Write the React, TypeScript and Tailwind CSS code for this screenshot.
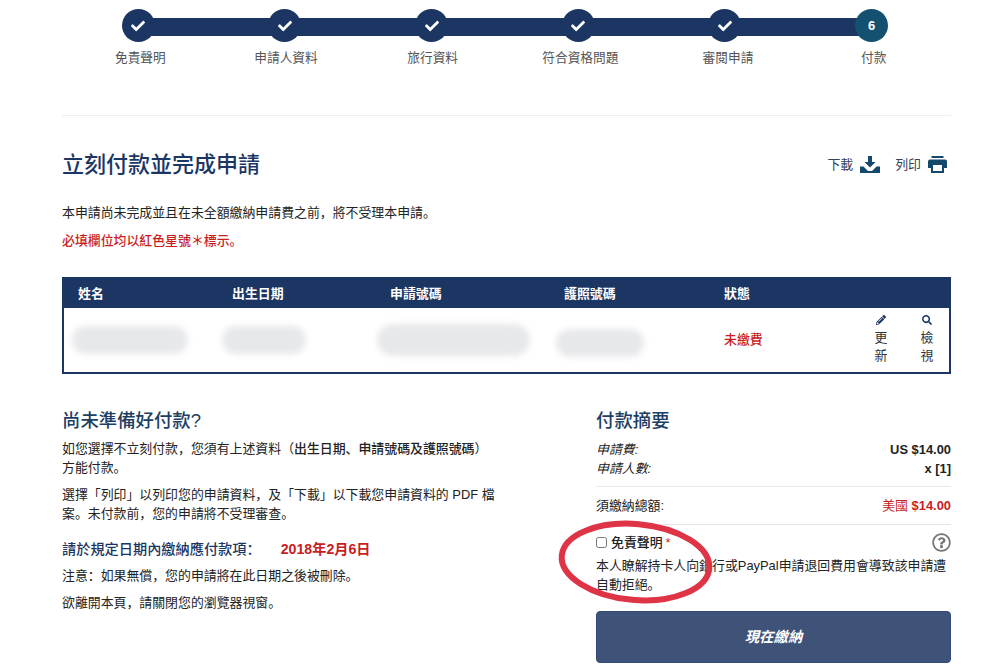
import { FaCheck, FaPencilAlt, FaRegQuestionCircle, FaSearch } from 'react-icons/fa';

const STEPS = [
  { label: '免責聲明', labelClass: 'ml-[4px]' },
  { label: '申請人資料', labelClass: 'ml-[2px]' },
  { label: '旅行資料', labelClass: 'ml-[2px]' },
  { label: '符合資格問題', labelClass: 'ml-[4px]' },
  { label: '審閱申請', labelClass: 'ml-[6px]' },
  { label: '付款', labelClass: 'ml-[4px]' },
];

function DownloadIcon() {
  return (
    <svg width="20" height="17" viewBox="0 0 20 17" className="ml-[7px] text-[#14496b]" fill="currentColor">
      <path d="M8 0h4v6h3.500L10 11.500 4.500 6H8z" />
      <path d="M0 10.500h3.500L8 15h4l4.500-4.500H20V17H0z" />
    </svg>
  );
}

function PrintIcon() {
  return (
    <svg width="19" height="17" viewBox="0 0 19 17" className="ml-[7px] text-[#14496b]" fill="currentColor">
      <path d="M3.500 0h12v2h-12z" />
      <path fillRule="evenodd" d="M2 3.500h15a2 2 0 0 1 2 2V12h-3v5H3v-5H0V5.500a2 2 0 0 1 2-2zM5 9v6h9V9z" />
    </svg>
  );
}

function Stepper() {
  return (
    <div className="relative ml-[65px] grid w-[880px] grid-cols-6 pt-[9px]">
      {/* 連接線 */}
      <div className="absolute left-[73px] right-[73px] top-[18px] h-[18px] bg-[#1c3663]" />
      {STEPS.map(({ label, labelClass }, i) => {
        const current = i === STEPS.length - 1;
        return (
          <div key={label} className="relative flex flex-col items-center">
            <div
              className={`flex h-[33px] w-[33px] items-center justify-center rounded-full text-white ${
                current ? 'bg-[#14506f]' : 'bg-[#1c3663]'
              }`}
            >
              {current ? <span className="text-[13px] font-bold">6</span> : <FaCheck className="text-[14px]" />}
            </div>
            <span className={`mt-[8px] whitespace-nowrap text-[12.7px] leading-[17px] text-[#555] ${labelClass}`}>{label}</span>
          </div>
        );
      })}
    </div>
  );
}

function Blur({ width, height = 28 }: { width: number; height?: number }) {
  return <div className="rounded-full bg-[#e7e8eb] blur-[3px]" style={{ width, height }} />;
}

function ApplicantTable() {
  return (
    <div className="mt-[27px] border-2 border-[#1c3663]">
      <div className="grid h-[29px] grid-cols-[154px_158px_174px_160px_1fr] items-center bg-[#1c3663] pl-[14px] font-bold text-white">
        <span>姓名</span>
        <span>出生日期</span>
        <span>申請號碼</span>
        <span>護照號碼</span>
        <span>狀態</span>
      </div>
      <div className="grid h-[64px] grid-cols-[154px_158px_174px_160px_150px_46px_1fr] items-center pl-[14px]">
        <div className="-ml-[6px]"><Blur width={116} /></div>
        <div className="-ml-[10px]"><Blur width={84} /></div>
        <div className="-ml-[13px]"><Blur width={153} height={32} /></div>
        <div className="-ml-[8px] mt-[6px]"><Blur width={88} /></div>
        <span className="font-medium text-[#c81e1e]">未繳費</span>
        <div className="flex w-[14px] flex-col items-center leading-[18px] text-[#333]">
          <FaPencilAlt className="mb-[4px] text-[10px] text-[#1c3663]" />
          <span>更</span>
          <span>新</span>
        </div>
        <div className="flex w-[14px] flex-col items-center leading-[18px] text-[#333]">
          <FaSearch className="mb-[4px] text-[10px] text-[#1c3663]" />
          <span>檢</span>
          <span>視</span>
        </div>
      </div>
    </div>
  );
}

export default function App() {
  return (
    <div
      className="relative h-[666px] overflow-hidden bg-white pl-[62px] pr-[49px] text-[12.9px] text-[#222]"
      style={{ fontFamily: '"Liberation Sans", "Noto Sans CJK SC", sans-serif' }}
    >
      <div className="-ml-[62px]">
        <Stepper />
      </div>
      <div className="mt-[48px] border-t border-[#eeeeee]" />

      <div className="mt-[35px] flex items-center justify-between">
        <h1 className="text-[22px] font-medium leading-[28px] text-[#1c3663]">立刻付款並完成申請</h1>
        <div className="flex items-center pr-[4px] text-[#33415c]">
          <span>下載</span>
          <DownloadIcon />
          <span className="ml-[15px]">列印</span>
          <PrintIcon />
        </div>
      </div>

      <p className="mt-[25px] leading-[18px]">本申請尚未完成並且在未全額繳納申請費之前，將不受理本申請。</p>
      <p className="mt-[10px] font-medium leading-[18px] text-[#c81e1e]">必填欄位均以紅色星號＊標示。</p>

      <ApplicantTable />

      <div className="mt-[34px] flex justify-between">
        <div className="w-[436px] leading-[19px]">
          <h2 className="text-[18.4px] font-medium leading-[26px] text-[#1c3f63]">尚未準備好付款?</h2>
          <p className="mt-[5px]">
            如您選擇不立刻付款，您須有上述資料（<span className="font-medium">出生日期、申請號碼及護照號碼</span>）
            <br />
            方能付款。
          </p>
          <p className="mt-[8px]">選擇「列印」以列印您的申請資料，及「下載」以下載您申請資料的 PDF 檔案。未付款前，您的申請將不受理審查。</p>
          <div className="mt-[17px] flex items-center text-[14.2px] font-medium">
            <span className="text-[#1c3663]">請於規定日期內繳納應付款項：</span>
            <span className="ml-[20px] font-bold text-[#c81e1e]">2018年2月6日</span>
          </div>
          <p className="mt-[7px]">注意：如果無償，您的申請將在此日期之後被刪除。</p>
          <p className="mt-[8px]">欲離開本頁，請關閉您的瀏覽器視窗。</p>
        </div>

        <div className="w-[355px]">
          <h2 className="text-[18.4px] font-medium leading-[26px] text-[#1c3f63]">付款摘要</h2>
          <div className="mt-[6px] flex justify-between leading-[19px]">
            <i>申請費:</i>
            <b>US $14.00</b>
          </div>
          <div className="flex justify-between leading-[19px]">
            <i>申請人數:</i>
            <b>x [1]</b>
          </div>
          <div className="mt-[8px] flex justify-between border-t border-[#e9e9e9] py-[9px] leading-[19px]">
            <span>須繳納總額:</span>
            <span className="text-[#c81e1e]">美國 <b>$14.00</b></span>
          </div>
          <div className="flex items-center justify-between border-t border-[#e5e5e5] pt-[8px]">
            <label className="flex items-center font-medium">
              <input type="checkbox" className="h-[11px] w-[11px]" />
              <span className="ml-[4px]">免責聲明</span>
              <span className="ml-[3px] text-[#c81e1e]">*</span>
            </label>
            <FaRegQuestionCircle className="text-[19px] text-[#777]" />
          </div>
          <p className="mt-[4px] leading-[19px]">本人瞭解持卡人向銀行或PayPal申請退回費用會導致該申請遭自動拒絕。</p>
          <button className="mt-[17px] flex h-[52px] w-full items-center justify-center rounded-[4px] border border-[#2f4a78] bg-[#3f5379] text-[14.4px] font-bold italic text-white">
            現在繳納
          </button>
        </div>
      </div>

      {/* 紅色圈選標記 */}
      <svg className="pointer-events-none absolute left-[555px] top-[518px]" width="162" height="90" viewBox="0 0 162 90" fill="none">
        <ellipse cx="80.500" cy="44" rx="74" ry="38" stroke="#de3445" strokeWidth="6" transform="rotate(5 80.500 44)" />
      </svg>
    </div>
  );
}
